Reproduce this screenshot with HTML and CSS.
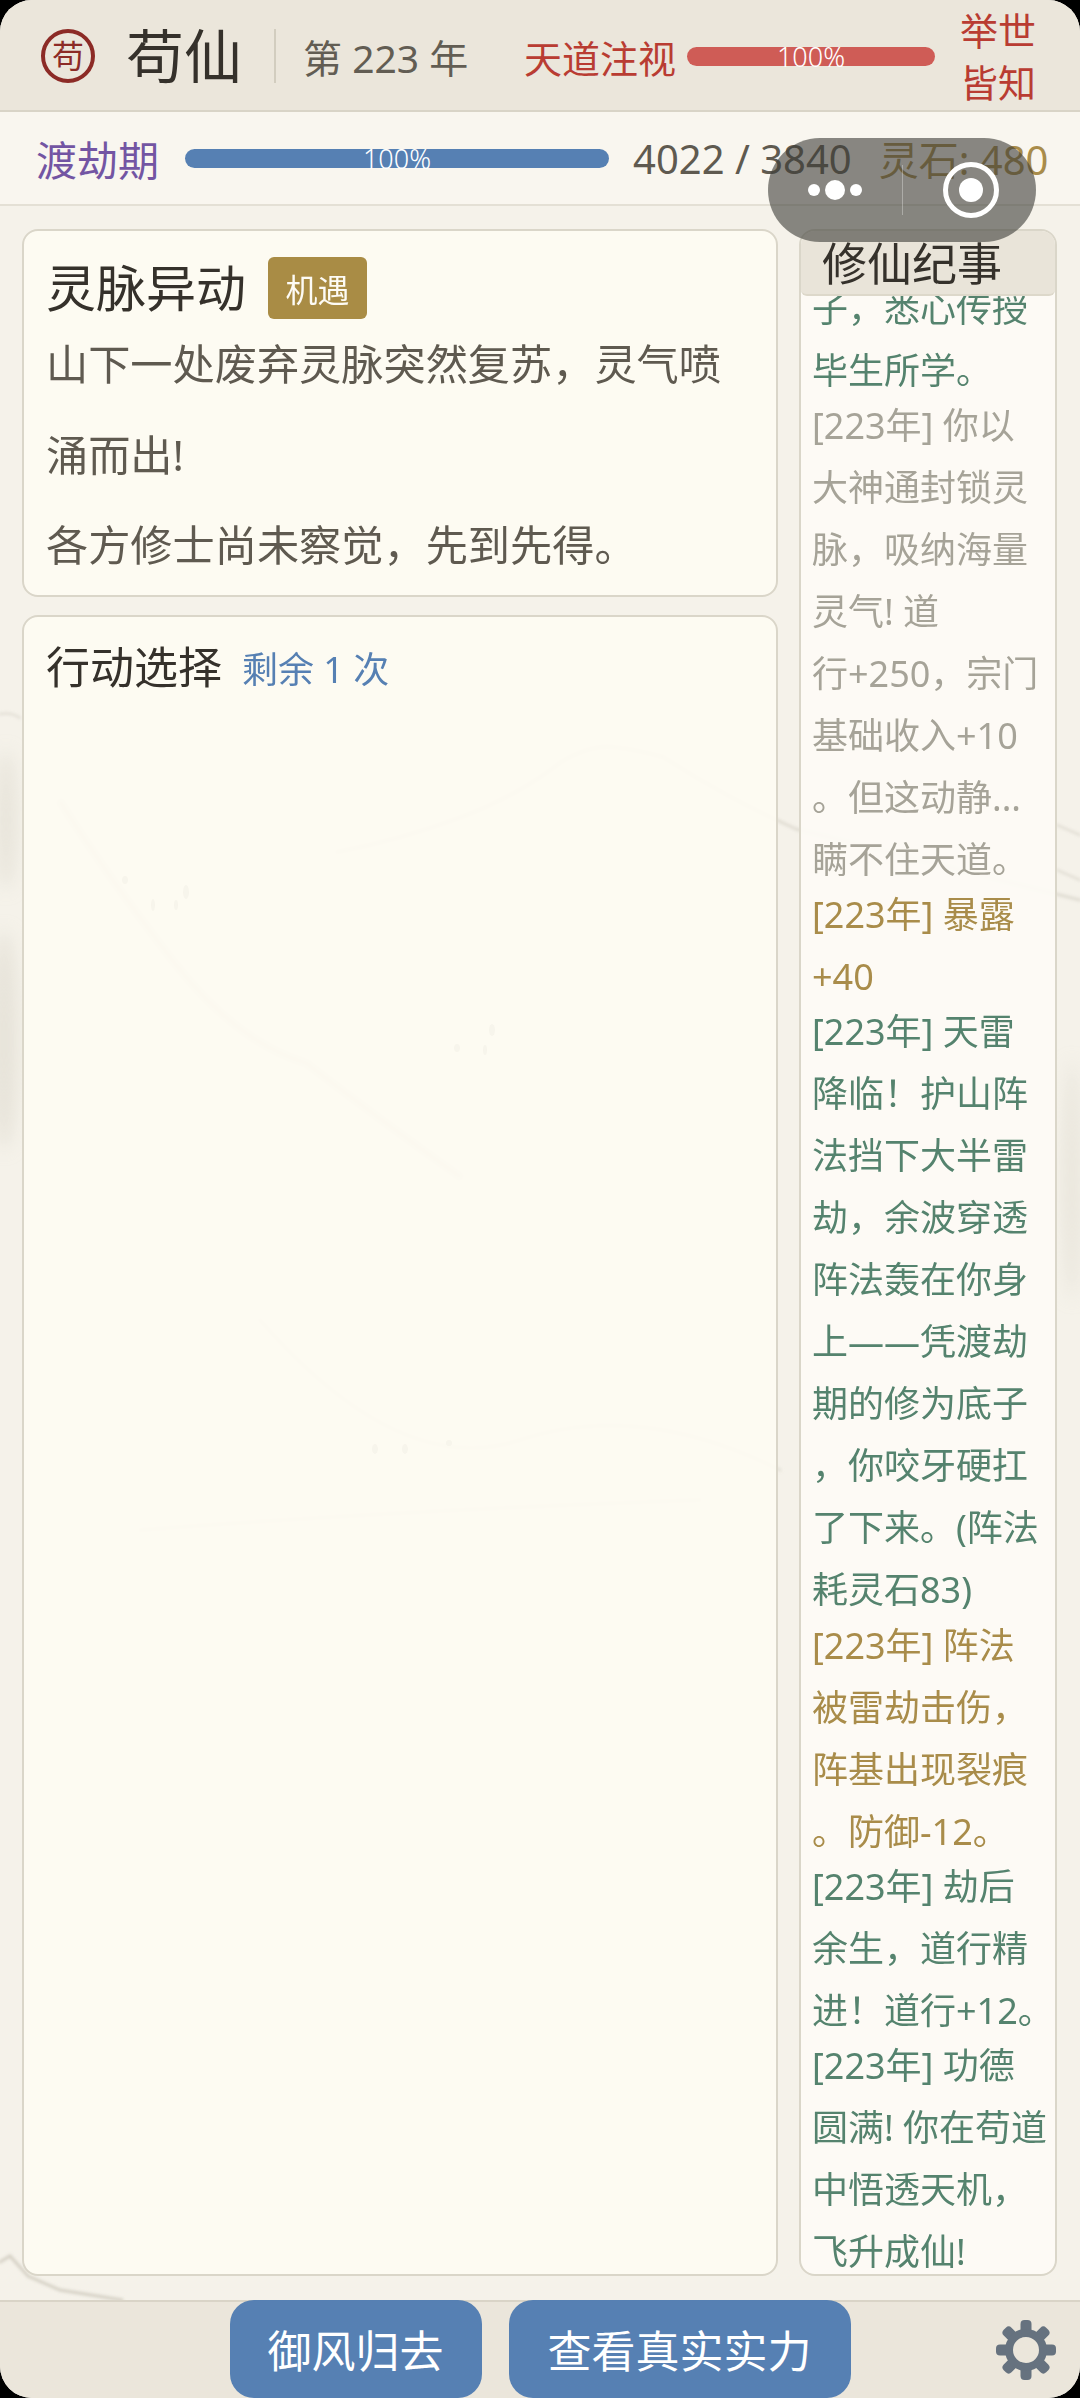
FILE: index.html
```html
<!DOCTYPE html>
<html lang="zh-CN">
  <head>
    <meta charset="UTF-8" />
    <meta name="viewport" content="width=device-width, initial-scale=1" />
    <title>苟仙</title>
    <link rel="stylesheet" href="styles.css">
  </head>
  <body>
    <div class="app">
      <!-- 水墨底纹 -->
      <svg class="ink-bg" viewBox="0 0 1080 2398" aria-hidden="true">
        <defs>
          <filter id="ink-blur"><feGaussianBlur stdDeviation="1.5" /></filter>
          <filter id="ink-soft"><feGaussianBlur stdDeviation="9" /></filter>
        </defs>
        <g fill="#d8d4c8" opacity=".5" filter="url(#ink-soft)">
          <ellipse cx="4" cy="1040" rx="14" ry="110" />
          <ellipse cx="6" cy="820" rx="10" ry="70" />
          <ellipse cx="1072" cy="1180" rx="8" ry="120" />
        </g>
        <g fill="none" stroke="#cdc8bb" stroke-linecap="round" filter="url(#ink-blur)">
          <path stroke-width="3" opacity=".8" d="M0 2262 L10 2256 L28 2276 L60 2290 L122 2300" />
          <path stroke-width="3" opacity=".5" d="M337 852 Q400 840 459 818 T561 762 Q590 745 612 747 T663 757 Q730 800 796 829 L1080 900" />
          <path stroke-width="8" opacity=".4" d="M61 803 Q110 880 173 961 T306 1063 Q380 1120 459 1176" />
          <path stroke-width="2" opacity=".5" d="M0 714 Q12 712 20 718 M1057 825 L1080 835 M1057 870 L1080 880" />
          <path stroke-width="3" opacity=".4" d="M260 1320 Q400 1480 520 1440 T780 1470 M140 1530 Q400 1510 700 1500" />
        </g>
        <g fill="#a8a396" opacity=".8">
          <ellipse cx="125" cy="880" rx="3" ry="4" />
          <ellipse cx="153" cy="905" rx="2" ry="6" />
          <ellipse cx="176" cy="905" rx="2" ry="5" />
          <ellipse cx="186" cy="892" rx="3" ry="7" />
          <ellipse cx="457" cy="1048" rx="3" ry="4" />
          <ellipse cx="485" cy="1050" rx="2" ry="5" />
          <ellipse cx="492" cy="1030" rx="3" ry="6" />
          <ellipse cx="375" cy="1449" rx="3" ry="5" />
          <ellipse cx="405" cy="1449" rx="3" ry="5" />
          <ellipse cx="449" cy="1443" rx="3" ry="3" />
        </g>
      </svg>

      <header class="top-bar">
        <span class="seal">苟</span>
        <h1 class="game-title">苟仙</h1>
        <span class="top-divider"></span>
        <span class="year">第 223 年</span>
        <span class="gaze-label">天道注视</span>
        <div class="bar bar-gaze"><span>100%</span></div>
        <span class="gaze-state">举世<br>皆知</span>
      </header>

      <section class="stat-bar">
        <span class="realm">渡劫期</span>
        <div class="bar bar-cult"><span>100%</span></div>
        <span class="cult-num">4022 / 3840</span>
        <span class="stones">灵石: 480</span>
      </section>

      <main class="content">
        <div class="left-col">
          <section class="card event-card">
            <div class="event-head">
              <h2 class="event-title">灵脉异动</h2>
              <span class="event-tag">机遇</span>
            </div>
            <p class="event-text">山下一处废弃灵脉突然复苏，灵气喷<br>涌而出!</p>
            <p class="event-text">各方修士尚未察觉，先到先得。</p>
          </section>
          <section class="card action-card">
            <div class="action-head">
              <h2 class="action-title">行动选择</h2>
              <span class="action-left">剩余 1 次</span>
            </div>
          </section>
        </div>

        <aside class="log-panel">
          <h2 class="log-title">修仙纪事</h2>
          <div class="log-list">
            <p class="log log-green">子，悉心传授<br>毕生所学。</p>
            <p class="log log-grey">[223年] 你以<br>大神通封锁灵<br>脉，吸纳海量<br>灵气! 道<br>行+250，宗门<br>基础收入+10<br>。但这动静...<br>瞒不住天道。</p>
            <p class="log log-gold">[223年] 暴露<br>+40</p>
            <p class="log log-green">[223年] 天雷<br>降临！护山阵<br>法挡下大半雷<br>劫，余波穿透<br>阵法轰在你身<br>上——凭渡劫<br>期的修为底子<br>，你咬牙硬扛<br>了下来。(阵法<br>耗灵石83)</p>
            <p class="log log-gold">[223年] 阵法<br>被雷劫击伤，<br>阵基出现裂痕<br>。防御-12。</p>
            <p class="log log-green">[223年] 劫后<br>余生，道行精<br>进！道行+12。</p>
            <p class="log log-green">[223年] 功德<br>圆满! 你在苟道<br>中悟透天机，<br>飞升成仙!</p>
          </div>
        </aside>
      </main>

      <footer class="bottom-bar">
        <div class="bottom-btns">
          <button class="btn btn-leave">御风归去</button>
          <button class="btn btn-power">查看真实实力</button>
        </div>
        <svg class="gear" viewBox="0 0 60 60" aria-hidden="true">
          <g fill="#66727f">
            <rect x="24.5" y="0" width="11" height="60" rx="4" />
            <rect x="24.5" y="0" width="11" height="60" rx="4" transform="rotate(45 30 30)" />
            <rect x="24.5" y="0" width="11" height="60" rx="4" transform="rotate(90 30 30)" />
            <rect x="24.5" y="0" width="11" height="60" rx="4" transform="rotate(135 30 30)" />
          </g>
          <circle cx="30" cy="30" r="17" fill="#ebe6db" stroke="#66727f" stroke-width="8" />
        </svg>
      </footer>

      <!-- 小程序胶囊 -->
      <div class="capsule">
        <span class="capsule-dots"><i></i><i class="big"></i><i></i></span>
        <span class="capsule-line"></span>
        <span class="capsule-ring"><i></i></span>
      </div>
    </div>
  </body>
</html>
```

FILE: styles.css
```css
* {
  box-sizing: border-box;
}

html,
body {
  margin: 0;
  padding: 0;
  background: #000;
}

h1,
h2,
p {
  margin: 0;
  font-weight: 400;
}

.app {
  position: relative;
  width: 1080px;
  height: 2398px;
  display: flex;
  flex-direction: column;
  overflow: hidden;
  border-radius: 32px;
  background: #f5f2ea;
  font-family: "Noto Sans", "Noto Sans CJK SC", sans-serif;
  color: #5f5a50;
}

.ink-bg {
  position: absolute;
  top: 0;
  left: 0;
  width: 1080px;
  height: 2398px;
}

/* 顶栏 */
.top-bar {
  position: relative;
  height: 112px;
  flex: none;
  display: flex;
  align-items: center;
  padding: 2px 44px 0 41px;
  background: #ebe6db;
  border-bottom: 2px solid #d9d4c7;
}

.seal {
  width: 54px;
  height: 54px;
  flex: none;
  display: flex;
  justify-content: center;
  align-items: center;
  border: 4px solid #8c2b26;
  border-radius: 50%;
  font-size: 32px;
  line-height: 1;
  color: #8c2b26;
}

.game-title {
  margin-left: 31px;
  font-size: 58px;
  line-height: 1;
  color: #35312b;
}

.top-divider {
  width: 2px;
  height: 54px;
  margin: 0 27px 0 32px;
  background: #d2cdbf;
}

.year {
  width: 221px;
  flex: none;
  font-size: 39px;
  color: #625d53;
  white-space: nowrap;
}

.gaze-label {
  font-size: 38px;
  color: #b93c32;
  white-space: nowrap;
}

.gaze-state {
  margin-left: auto;
  font-size: 38px;
  line-height: 52px;
  color: #b93c32;
}

.bar {
  height: 19px;
  flex: none;
  display: flex;
  justify-content: center;
  align-items: center;
  border-radius: 10px;
}

.bar span {
  font-size: 27px;
  line-height: 19px;
  font-weight: 300;
  color: #fff;
}

.bar-gaze {
  width: 248px;
  margin-left: 11px;
  background: #cf5c56;
}

.bar-cult {
  width: 424px;
  margin: 0 24px 0 26px;
  background: #5680b3;
}

/* 境界栏 */
.stat-bar {
  position: relative;
  height: 94px;
  flex: none;
  display: flex;
  align-items: center;
  padding: 0 0 0 36px;
  background: rgba(250, 247, 240, 0.75);
  border-bottom: 2px solid #e4e0d5;
}

.realm {
  font-size: 41px;
  color: #7355a3;
  white-space: nowrap;
}

.cult-num {
  font-size: 40px;
  color: #5f5a50;
  white-space: nowrap;
}

.stones {
  margin-left: 27px;
  font-size: 40px;
  color: #a98c4a;
  white-space: nowrap;
}

/* 主体 */
.content {
  position: relative;
  flex: 1;
  min-height: 0;
  display: flex;
  gap: 21px;
  padding: 23px 23px 24px 22px;
}

.left-col {
  flex: 1;
  min-width: 0;
  display: flex;
  flex-direction: column;
  gap: 18px;
}

.card {
  background: rgba(254, 252, 243, 0.9);
  border: 2px solid #dad6c9;
  border-radius: 16px;
}

.event-card {
  height: 368px;
  flex: none;
  padding: 26px 22px 5px;
}

.event-head {
  height: 62px;
  display: flex;
  align-items: center;
}

.event-title {
  font-size: 50px;
  line-height: 1;
  color: #35312b;
}

.event-tag {
  width: 99px;
  height: 62px;
  margin-left: 22px;
  display: flex;
  justify-content: center;
  align-items: center;
  border-radius: 6px;
  background: #a98c45;
  font-size: 32px;
  color: #fdfbf5;
}

.event-text {
  font-size: 42.2px;
  line-height: 90.5px;
  color: #5f5a50;
}

.action-card {
  flex: 1;
  padding: 18px 22px;
}

.action-head {
  display: flex;
  align-items: center;
  gap: 20px;
}

.action-title {
  font-size: 44px;
  line-height: 64px;
  color: #35312b;
}

.action-left {
  font-size: 36px;
  color: #5680b3;
}

/* 纪事 */
.log-panel {
  width: 258px;
  flex: none;
  display: flex;
  flex-direction: column;
  overflow: hidden;
  background: rgba(253, 251, 245, 0.93);
  border: 2px solid #dad6c9;
  border-radius: 16px;
}

.log-title {
  height: 65px;
  flex: none;
  padding-left: 21px;
  background: #e9e4d9;
  border-bottom: 2px solid #ddd8ca;
  border-radius: 0 0 6px 6px;
  font-size: 45px;
  line-height: 66px;
  color: #35312b;
  white-space: nowrap;
}

.log-list {
  flex: 1;
  min-height: 0;
  display: flex;
  flex-direction: column;
  justify-content: flex-end;
  overflow: hidden;
  padding-left: 11px;
}

.log {
  flex: none;
  margin-bottom: -6.8px;
  font-size: 36px;
  line-height: 62px;
  white-space: nowrap;
}

.log:last-child {
  margin-bottom: -9px;
}

.log-green {
  color: #55836e;
}

.log-grey {
  color: #a6a398;
}

.log-gold {
  color: #a98c4a;
}

/* 底栏 */
.bottom-bar {
  position: relative;
  height: 98px;
  flex: none;
  display: grid;
  grid-template-columns: 1fr auto 1fr;
  align-items: center;
  background: #ebe6db;
  border-top: 2px solid #d9d4c7;
}

.bottom-btns {
  grid-column: 2;
  display: flex;
  gap: 27px;
  margin-top: -2px;
}

.btn {
  height: 98px;
  padding: 0;
  border: none;
  border-radius: 24px;
  background: #5680b3;
  font-family: inherit;
  font-size: 44px;
  color: #fff;
}

.btn-leave {
  width: 252px;
}

.btn-power {
  width: 342px;
}

.gear {
  grid-column: 3;
  justify-self: end;
  width: 60px;
  height: 60px;
  margin-right: 24px;
}

/* 胶囊按钮 */
.capsule {
  position: absolute;
  top: 138px;
  left: 768px;
  width: 268px;
  height: 104px;
  display: flex;
  align-items: center;
  border-radius: 52px;
  background: rgba(60, 60, 55, 0.6);
}

.capsule-dots {
  width: 134px;
  display: flex;
  justify-content: center;
  align-items: center;
  gap: 5px;
}

.capsule-dots i {
  width: 12px;
  height: 12px;
  border-radius: 50%;
  background: #fff;
}

.capsule-dots i.big {
  width: 20px;
  height: 20px;
}

.capsule-line {
  width: 1px;
  height: 50px;
  background: rgba(255, 255, 255, 0.3);
}

.capsule-ring {
  width: 56px;
  height: 56px;
  margin-left: 40px;
  display: flex;
  justify-content: center;
  align-items: center;
  border: 5px solid #fff;
  border-radius: 50%;
}

.capsule-ring i {
  width: 24px;
  height: 24px;
  border-radius: 50%;
  background: #fff;
}
```
